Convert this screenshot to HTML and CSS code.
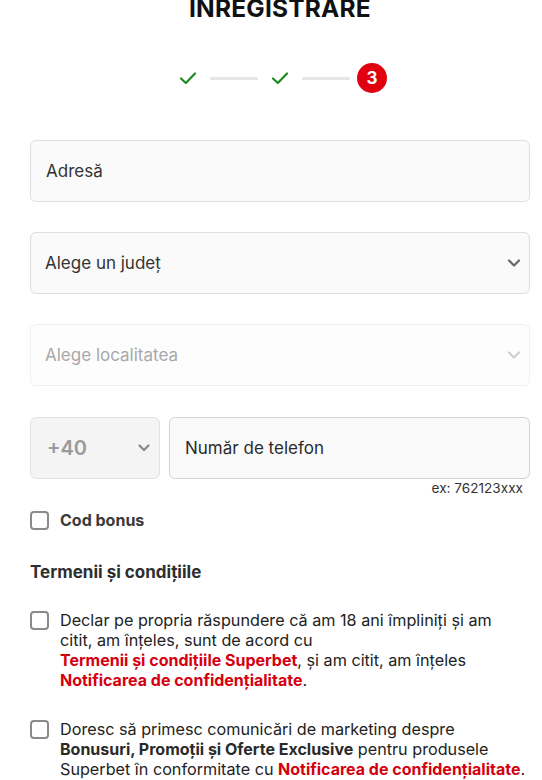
FILE: index.html
```html
<!DOCTYPE html>
<html lang="ro">
<head>
<meta charset="utf-8">
<link rel="stylesheet" href="styles.css">
</head>
<body>
<div class="page">
  <h1 class="title">INREGISTRARE</h1>
  <div class="stepper">
    <svg class="check" viewBox="0 0 18 18" width="18" height="18"><path d="M2 9.5 L6.8 14 L16 4.5" fill="none" stroke="#1e8a22" stroke-width="2.2" stroke-linecap="round" stroke-linejoin="round"/></svg>
    <span class="line"></span>
    <svg class="check" viewBox="0 0 18 18" width="18" height="18"><path d="M2 9.5 L6.8 14 L16 4.5" fill="none" stroke="#1e8a22" stroke-width="2.2" stroke-linecap="round" stroke-linejoin="round"/></svg>
    <span class="line last"></span>
    <span class="step-num">3</span>
  </div>

  <div class="field">Adresă</div>

  <div class="field select">
    <span>Alege un județ</span>
    <svg class="chev" viewBox="0 0 14 10" width="14" height="10"><path d="M2 2.5 L7 7.5 L12 2.5" fill="none" stroke="#666" stroke-width="2.2" stroke-linecap="round" stroke-linejoin="round"/></svg>
  </div>

  <div class="field select disabled">
    <span>Alege localitatea</span>
    <svg class="chev" viewBox="0 0 14 10" width="14" height="10"><path d="M2 2.5 L7 7.5 L12 2.5" fill="none" stroke="#cfcfcf" stroke-width="2.2" stroke-linecap="round" stroke-linejoin="round"/></svg>
  </div>

  <div class="phone-row">
    <div class="prefix">
      <span>+40</span>
      <svg class="chev" viewBox="0 0 14 10" width="14" height="10"><path d="M2.5 2.5 L7 7 L11.5 2.5" fill="none" stroke="#888" stroke-width="2.2" stroke-linecap="round" stroke-linejoin="round"/></svg>
    </div>
    <div class="field phone">Număr de telefon</div>
  </div>
  <div class="hint">ex: 762123xxx</div>

  <label class="check-row bonus">
    <span class="box"></span>
    <span class="bonus-text">Cod bonus</span>
  </label>

  <h2 class="section">Termenii și condițiile</h2>

  <div class="check-row consent">
    <span class="box"></span>
    <p class="consent-text">Declar pe propria răspundere că am 18 ani împliniți și am citit, am înțeles, sunt de acord cu <a class="red nowrap">Termenii și condițiile Superbet</a>, și am citit, am înțeles <a class="red nowrap">Notificarea de confidențialitate</a>.</p>
  </div>

  <div class="check-row consent second">
    <span class="box"></span>
    <p class="consent-text">Doresc să primesc comunicări de marketing despre <b>Bonusuri, Promoții și Oferte Exclusive</b> pentru produsele Superbet în conformitate cu <a class="red nowrap">Notificarea de confidențialitate</a>.</p>
  </div>
</div>
</body>
</html>
```

FILE: styles.css
```css
* { box-sizing: border-box; }
html, body { margin: 0; padding: 0; background: #fff; }
body {
  font-family: Inter, "Noto Sans", "Liberation Sans", sans-serif;
  color: #222;
}
.page {
  padding: 0 12px 0 30px;
  overflow: hidden;
  height: 780px;
}
.title {
  margin: -6px 0 0;
  font-size: 24.5px;
  line-height: 28px;
  font-weight: 700;
  text-align: center;
  color: #111;
  letter-spacing: 0.2px;
}
.stepper {
  margin-top: 41px;
  height: 30px;
  display: flex;
  align-items: center;
  justify-content: center;
  padding-left: 6px;
}
.check { display: block; }
.line {
  width: 48px;
  height: 3px;
  background: #e6e6e6;
  border-radius: 2px;
  margin: 0 13px;
}
.line.last { margin-right: 7px; }
.step-num {
  width: 30px;
  height: 30px;
  border-radius: 50%;
  background: #e1000f;
  color: #fff;
  font-weight: 700;
  font-size: 17px;
  display: flex;
  align-items: center;
  justify-content: center;
}
.field {
  height: 62px;
  border: 1px solid #dedede;
  border-radius: 6px;
  background: #fafafa;
  display: flex;
  align-items: center;
  padding: 0 15px;
  font-size: 17px;
  color: #333;
  margin-top: 30px;
}
.stepper + .field { margin-top: 47px; }
.select { justify-content: space-between; padding-right: 8px; padding-left: 14px; }
.disabled {
  background: #fdfdfd;
  border-color: #efefef;
  color: #a8a8a8;
}
.phone-row {
  display: flex;
  gap: 9px;
  margin-top: 31px;
}
.prefix {
  width: 130px;
  height: 62px;
  border: 1px solid #e2e2e2;
  border-radius: 6px;
  background: #f4f4f4;
  display: flex;
  align-items: center;
  justify-content: space-between;
  padding: 0 8px 0 16px;
  font-size: 20px;
  font-weight: 600;
  color: #9a9a9a;
}
.phone-row .field.phone {
  flex: 1;
  margin-top: 0;
  border-color: #d3d3d3;
  color: #2a2a2a;
}
.hint {
  text-align: right;
  font-size: 13.6px;
  line-height: 16px;
  color: #333;
  padding-right: 7px;
  margin-top: 1px;
}
.check-row {
  display: flex;
  align-items: flex-start;
  gap: 11px;
}
.box {
  flex: none;
  width: 19px;
  height: 19px;
  border: 2px solid #8a8a8a;
  border-radius: 4px;
  background: #fff;
}
.bonus {
  margin-top: 14px;
  align-items: center;
}
.bonus-text {
  font-size: 16px;
  font-weight: 700;
  color: #3a3a3a;
}
.section {
  margin: 30px 0 0;
  font-size: 17px;
  line-height: 24px;
  font-weight: 700;
  color: #2e2e2e;
}
.consent { margin-top: 26px; }
.consent .box { margin-top: 1px; }
.consent-text {
  margin: 0;
  font-size: 16.2px;
  line-height: 20px;
  color: #222;
  padding-right: 4px;
}
.consent-text b { font-weight: 700; color: #2a2a2a; font-size: 16px; }
.red {
  color: #d5000f;
  font-weight: 700;
  font-size: 16px;
  text-decoration: none;
}
.nowrap { white-space: nowrap; }
.second { margin-top: 29px; }
```
